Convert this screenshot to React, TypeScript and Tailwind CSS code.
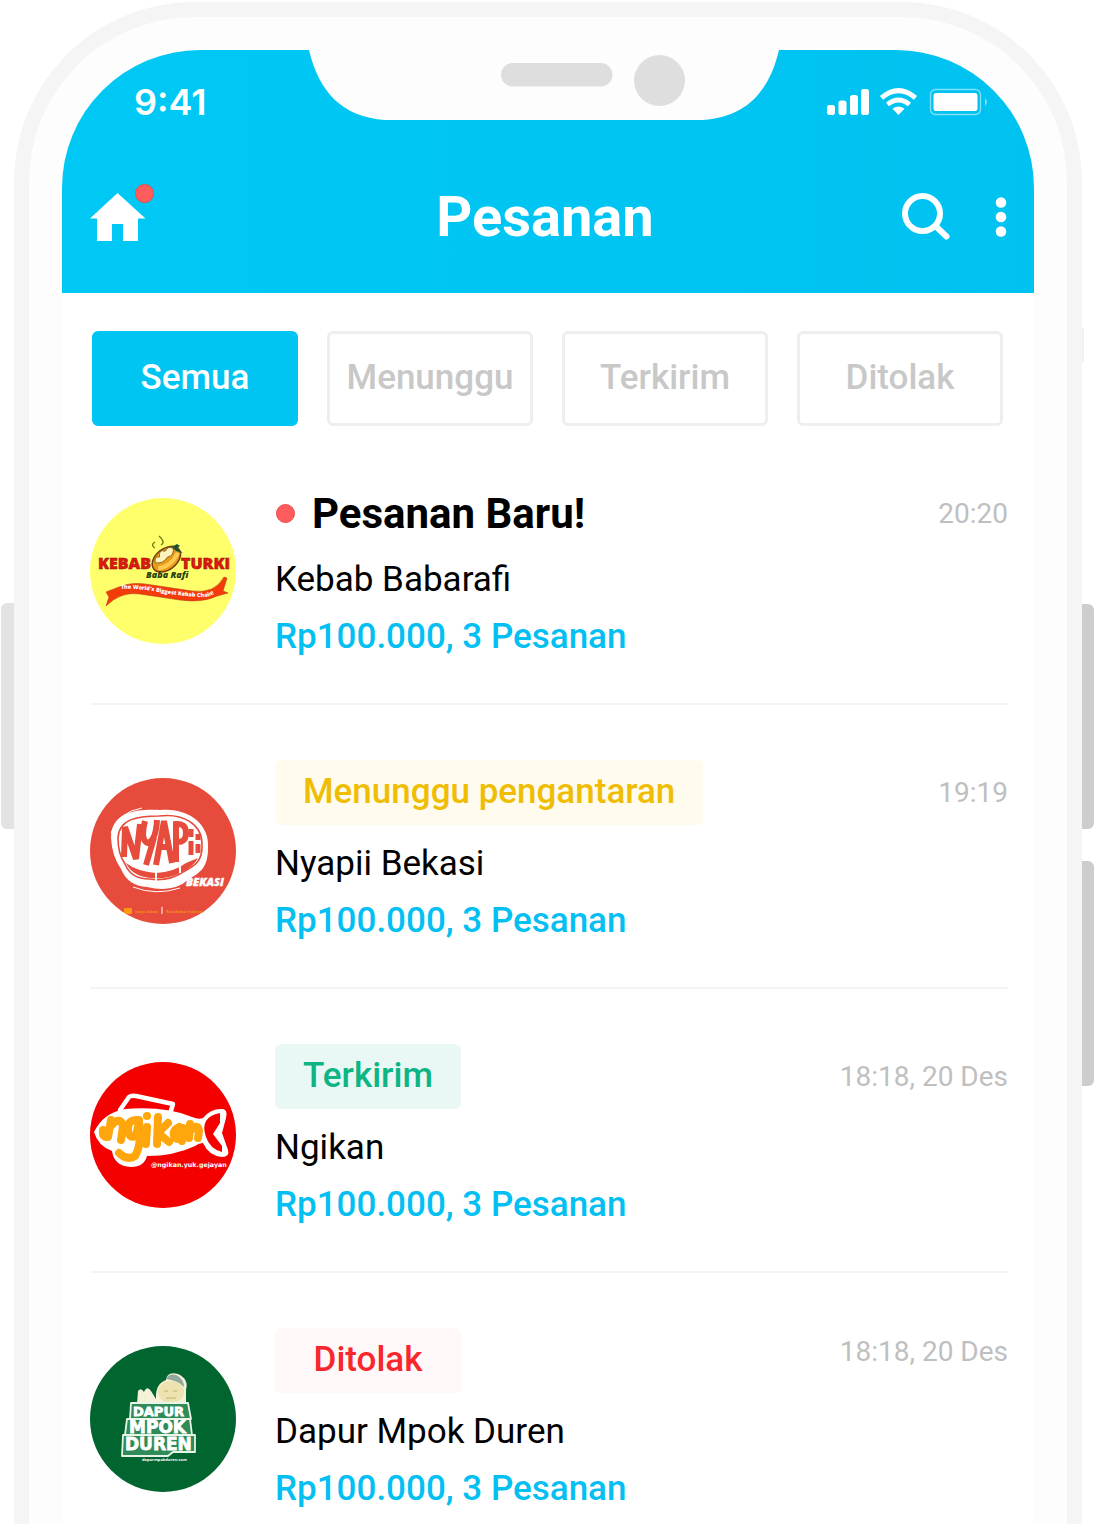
import React, { useState } from "react";

const tabs = ["Semua", "Menunggu", "Terkirim", "Ditolak"];

function HomeIcon() {
  return (
    <svg viewBox="0 0 56 50" className="block h-[50px] w-14" fill="#fff" aria-hidden="true">
      <path d="M27.5 1 L0 26.5 H7 V49 H22 V32 H33 V49 H48 V26.5 H55.5 Z" />
    </svg>
  );
}

function SearchIcon() {
  return (
    <svg viewBox="0 0 50 50" className="block h-[50px] w-[50px]" fill="none" stroke="#fff" aria-hidden="true">
      <circle cx="21.500" cy="21.500" r="17.500" strokeWidth="6" />
      <path d="M34.500 34 L45.500 44.500" strokeWidth="6" strokeLinecap="round" />
    </svg>
  );
}

function MoreIcon() {
  return (
    <svg viewBox="0 0 12 40" className="block h-10 w-3" fill="#fff" aria-hidden="true">
      <circle cx="6" cy="5.500" r="5.300" />
      <circle cx="6" cy="20" r="5.300" />
      <circle cx="6" cy="34.500" r="5.300" />
    </svg>
  );
}

function StatusIcons() {
  return (
    <svg viewBox="0 0 162 28" className="h-7 w-[162px]" fill="#fff" aria-label="Status">
      <rect x="1" y="17" width="8" height="10" rx="2.800" />
      <rect x="12.500" y="12.500" width="8" height="14.500" rx="2.800" />
      <rect x="24" y="7" width="8" height="20" rx="2.800" />
      <rect x="35" y="1" width="8" height="26" rx="2.800" />
      <g fill="none" stroke="#fff">
        <path d="M55.500 9.800 Q72.500 -4.500 89.500 9.800" strokeWidth="5" />
        <path d="M61.500 16.500 Q72.500 7.500 83.500 16.500" strokeWidth="4.600" />
      </g>
      <path d="M66.500 20.800 Q72.500 16 78.500 20.800 L72.500 27 Z" />
      <rect x="104.500" y="1.500" width="50" height="25" rx="5" fill="none" stroke="#fff" strokeOpacity=".5" strokeWidth="1.300" />
      <rect x="107.500" y="5" width="44" height="18" rx="2.800" />
      <path d="M159 10 Q163 14 159 18 Z" fillOpacity=".5" />
    </svg>
  );
}

function Notch() {
  return (
    <svg viewBox="0 0 470 70" className="absolute top-0 left-[247px] h-[70px] w-[470px]" aria-hidden="true">
      <path d="M0 0 C10 42 33 67 76 70 H394 C437 67 460 42 470 0 Z" fill="#fdfdfd" />
      <rect x="192" y="13" width="111.500" height="23.500" rx="11.700" fill="#dedede" />
      <circle cx="350.500" cy="30.500" r="25.500" fill="#dedede" />
    </svg>
  );
}

function KebabLogo() {
  return (
    <svg viewBox="0 0 146 146" className="h-[146px] w-[146px]" role="img" aria-label="Kebab Turki Baba Rafi">
      <defs>
        <path id="kebab-ribbon" d="M31 91 Q48 90 68 94 T112 99 Q122 99 128 93" />
      </defs>
      <circle cx="73" cy="73" r="73" fill="#ffff6b" />
      <g fill="#e3170f" stroke="#8a1108" strokeWidth=".5" fontFamily="Open Sans, sans-serif" fontWeight="800" fontSize="16">
        <text x="8" y="71">KEBAB</text>
        <text x="91" y="71">TURKI</text>
      </g>
      <g transform="rotate(-38 77 62)">
        <ellipse cx="77" cy="61" rx="16" ry="10.500" fill="#e89a1c" stroke="#713f10" strokeWidth="1.500" />
        <path d="M65 63 Q76 70 90 63" fill="none" stroke="#ffc94d" strokeWidth="4" />
        <path d="M66 57 q3 -6 7 -2 q4 -7 8 -1 q6 -3 8 3 q-4 6 -10 3 q-7 3 -13 -3Z" fill="#fff3bd" stroke="#7c6115" strokeWidth=".8" />
      </g>
      <path d="M82 49 l5 -3 3 2 -3 2 6 5 -7 -2Z" fill="#175232" />
      <path d="M65 50 Q60 47 65 44 M71 47 Q76 44 69 38" fill="none" stroke="#65700d" strokeWidth="1.300" />
      <text x="56" y="80" fill="#28400a" fontFamily="Open Sans, sans-serif" fontWeight="800" fontStyle="italic" fontSize="9">Baba Rafi</text>
      <path d="M16 94 L29 89 Q42 83 62 87 L102 93 Q125 96 134 79 L137 80 L133 93 L138 95 L127 98 Q113 105 90 102 L50 96 Q31 93 16 108 L19 99 Z" fill="#f53b0a" stroke="#b64015" strokeWidth=".6" />
      <text fill="#fff" fontFamily="Open Sans, sans-serif" fontWeight="800" fontSize="5.500">
        <textPath href="#kebab-ribbon">The World's Biggest Kebab Chain!</textPath>
      </text>
    </svg>
  );
}

function NyapiiLogo() {
  return (
    <svg viewBox="0 0 146 146" className="h-[146px] w-[146px]" role="img" aria-label="Nyapii Bekasi">
      <defs>
        <clipPath id="nyapii-disc"><circle cx="73" cy="73" r="73" /></clipPath>
      </defs>
      <circle cx="73" cy="73" r="73" fill="#e64b3c" />
      <path d="M21 60 C21 34 46 31 70 32 C98 29 120 46 118 70 C118 92 108 95 98 102 Q83 115 57 109 Q38 108 31 91 Q22 78 21 60Z" fill="#fff" />
      <path d="M28 60 C29 41 47 38 69 38 C93 35 112 46 112 66 C113 84 104 88 93 94 Q78 104 59 101 Q41 101 35 86 Q28 76 28 60Z" fill="none" stroke="#e64b3c" strokeWidth="1.600" />
      <path d="M36 85 Q46 93 66 95 Q84 94 96 85 L108 80 Q104 88 92 94 Q78 102 60 100 Q42 98 36 85Z" fill="#e64b3c" />
      <g fill="none" stroke="#e64b3c" strokeWidth="6">
        <path d="M34 79 L35 49 L46 81 L50 46" />
        <path d="M55 43 Q50 63 58 65 Q66 62 67 42 M64 60 L56 87" />
        <path d="M66 87 L74 43 L82 85 M69 69 H80" />
        <path d="M86 84 V46 Q96 45 96 55 Q96 65 86 64" />
        <path d="M101 51 V59 M101 63 V77 M108 56 V62 M108 66 V75" strokeWidth="5" />
      </g>
      <path d="M21 55 Q28 34 52 30 M43 109 Q66 118 90 110" fill="none" stroke="#fff" strokeWidth="1" />
      <path d="M66 95 v8 M90 86 v9" stroke="#fff" strokeWidth="2" />
      <text x="96" y="108" fill="#fff" stroke="#fff" strokeWidth=".4" fontFamily="Open Sans, sans-serif" fontWeight="800" fontStyle="italic" fontSize="11">BEKASI</text>
      <g clipPath="url(#nyapii-disc)">
        <rect x="34" y="130" width="8" height="6" rx="1" fill="#ff9810" />
        <text x="45" y="135" fill="#f88d18" fontFamily="Open Sans, sans-serif" fontWeight="700" fontSize="3.500">nyapii.bekasi</text>
        <path d="M72 129 v7" stroke="#fff" strokeWidth="1" />
        <text x="76" y="135" fill="#f88d18" fontFamily="Open Sans, sans-serif" fontWeight="700" fontSize="3.500">Kota Bekasi Indonesia</text>
      </g>
    </svg>
  );
}

function NgikanLogo() {
  return (
    <svg viewBox="0 0 146 146" className="h-[146px] w-[146px]" role="img" aria-label="Ngikan">
      <circle cx="73" cy="73" r="73" fill="#f50000" />
      <path d="M30 48 L39 35 Q41 33 46 34 L83 42 L80 52" fill="none" stroke="#fff" strokeWidth="4.500" strokeLinejoin="round" strokeLinecap="round" />
      <path d="M4 70 Q13 51 35 47 Q76 44 102 55 Q109 58 113 56 Q121 46 133 47 Q138 48 136 56 L132 71 L138 88 Q140 95 132 95 Q119 94 113 81 Q109 81 105 84 Q84 94 57 94 Q54 105 41 105 Q24 104 22 89 Q8 84 4 70Z" fill="#fff" />
      <path d="M130 51 Q109 55 116 75 Q120 87 132 90 L132 84 L123 72 L130 61Z" fill="#f50000" />
      <g fill="none" stroke="#ffa60d" strokeWidth="8" strokeLinecap="round" strokeLinejoin="round">
        <path d="M13 68 Q12 76 18 75 L21 58 M20 65 Q30 53 33 64 L31 78" />
        <path d="M49 58 Q37 57 38 68 Q39 77 46 74 L49 60 Q52 83 45 94 Q37 99 29 91" />
        <path d="M57 65 L56 82 M68 55 L67 82 M78 61 L68 71 L79 80" />
        <path d="M89 65 Q81 69 85 76 Q90 80 93 66 L92 79" />
        <path d="M100 62 L99 76 M101 68 Q108 61 109 69 L108 76" />
      </g>
      <circle cx="57" cy="54" r="4" fill="#ffa60d" />
      <text x="61" y="105" fill="#fff" fontFamily="DejaVu Sans, sans-serif" fontWeight="700" fontSize="6.300">@ngikan.yuk.gejayan</text>
    </svg>
  );
}

function DapurLogo() {
  return (
    <svg viewBox="0 0 146 146" className="h-[146px] w-[146px]" role="img" aria-label="Dapur Mpok Duren">
      <circle cx="73" cy="73" r="73" fill="#00652e" />
      <path d="M47 58 L48 45 Q51 41 54 46 Q57 39 61 45 L66 53 Q65 38 76 34 Q77 25 88 28 Q99 33 96 44 L96 58Z" fill="#f4f1d9" />
      <path d="M76 33 Q80 26 88 30 Q94 34 94 41 Q87 34 76 33Z" fill="#93a7a0" />
      <ellipse cx="81" cy="46" rx="13" ry="11" fill="#ece3b0" />
      <path d="M74 45 h4 M83 45 h4 M76 52 h10" fill="none" stroke="#c4b071" strokeWidth="1" />
      <g fill="#2f8c59" stroke="#e7f5e9" strokeWidth="1.800" strokeLinejoin="round">
        <path d="M41 57 H98 L101 73 H40Z" />
        <path d="M37 73 H100 L102 89 H35Z" />
        <path d="M33 89 H105 V106 H83 L78 110 H32Z" />
      </g>
      <g fill="#fff" stroke="#fff" strokeWidth=".8" fontFamily="DejaVu Sans, sans-serif" fontWeight="700">
        <text x="43" y="70" fontSize="13">DAPUR</text>
        <text x="39" y="87" fontSize="17">MPOK</text>
        <text x="35" y="104" fontSize="17">DUREN</text>
      </g>
      <text x="52" y="115" fill="#fff" fontFamily="Open Sans, sans-serif" fontWeight="700" fontSize="4">dapurmpokduren.com</text>
    </svg>
  );
}

type Order = {
  name: string;
  status: string;
  time: string;
  timeClass: string;
  badgeClass?: string;
  logo: () => React.ReactElement;
};

const orders: Order[] = [
  { name: "Kebab Babarafi", status: "Pesanan Baru!", time: "20:20", timeClass: "leading-[75px]", logo: KebabLogo },
  { name: "Nyapii Bekasi", status: "Menunggu pengantaran", time: "19:19", timeClass: "leading-[65px]", badgeClass: "bg-[#fffbee] text-[#f0bd05]", logo: NyapiiLogo },
  { name: "Ngikan", status: "Terkirim", time: "18:18, 20 Des", timeClass: "leading-[65px]", badgeClass: "bg-[#e9f8f4] text-[#0db585]", logo: NgikanLogo },
  { name: "Dapur Mpok Duren", status: "Ditolak", time: "18:18, 20 Des", timeClass: "leading-[48px]", badgeClass: "bg-[#fff8f8] text-[#f8262d]", logo: DapurLogo },
];

function OrderRow({ order }: { order: Order }) {
  const Logo = order.logo;
  return (
    <li className="flex items-start border-b-2 border-[#f4f4f4] pt-[55px] pb-[38px] first:pt-[50px] last:border-0 last:pb-2">
      <div className={order.badgeClass ? "mt-[18px] shrink-0" : "mt-[22px] shrink-0"}>
        <Logo />
      </div>
      <div className="ml-[39px] min-w-0 flex-1">
        {order.badgeClass ? (
          <span className={`mb-[10px] flex h-[65px] w-fit min-w-[186px] items-center justify-center rounded-md px-7 text-[35px] font-medium ${order.badgeClass}`}>
            {order.status}
          </span>
        ) : (
          <h2 className="flex h-[75px] items-center gap-[17px] pl-px text-[42px] font-bold">
            <span className="h-[19px] w-[19px] rounded-full border border-[#f04848] bg-[#ff5d5d]" />
            {order.status}
          </h2>
        )}
        <p className="text-[35px] leading-[57px]">{order.name}</p>
        <p className="text-[35px] leading-[57px] font-medium text-[#03bff2]">Rp100.000, 3 Pesanan</p>
      </div>
      <time className={`shrink-0 text-[28px] text-[#bfbfbf] ${order.timeClass}`}>{order.time}</time>
    </li>
  );
}

export default function App() {
  const [active, setActive] = useState("Semua");
  return (
    <div className="min-h-screen overflow-hidden bg-white pt-0.5 font-['Roboto',sans-serif] text-black">
      <div className="relative mx-[14px]">
        <span className="absolute top-[601px] -left-[13px] h-[226px] w-[13px] rounded-l-md bg-[#e3e3e3]" />
        <span className="absolute top-[326px] -right-0.5 h-[34px] w-0.5 bg-[#f1f1f1]" />
        <span className="absolute top-[602px] -right-3 h-[225px] w-3 rounded-r-md bg-[#cdcdcd]" />
        <span className="absolute top-[859px] -right-3 h-[225px] w-3 rounded-r-md bg-[#cdcdcd]" />
        <div className="rounded-t-[180px] border-[15px] border-b-0 border-[#f5f5f5] bg-[#fdfdfd] px-[33px] pt-[33px]">
          <div className="relative overflow-hidden rounded-t-[138px] bg-white">
            <header className="bg-linear-to-r from-[#00c8f5] to-[#00c2f0] pb-[39px] text-white">
              <Notch />
              <div className="flex h-[104px] items-center justify-between pr-[46px] pl-[72px]">
                <span className="font-['Inter',sans-serif] text-[36px] font-semibold">9:41</span>
                <StatusIcons />
              </div>
              <div className="mt-[26px] grid h-[74px] grid-cols-[1fr_auto_1fr] items-center pr-[34px] pl-7">
                <button className="relative justify-self-start" aria-label="Beranda">
                  <HomeIcon />
                  <span className="absolute -top-2 -right-2 h-[19px] w-[19px] rounded-full border border-[#f04848] bg-[#ff5d5d]" />
                </button>
                <h1 className="text-[56px] leading-none font-bold">Pesanan</h1>
                <div className="-mr-[7px] flex items-center gap-11 justify-self-end">
                  <button aria-label="Cari"><SearchIcon /></button>
                  <button aria-label="Menu lainnya"><MoreIcon /></button>
                </div>
              </div>
            </header>
            <nav className="grid grid-cols-4 gap-[29px] pt-[38px] pr-[31px] pl-[30px]">
              {tabs.map((t) => (
                <button
                  key={t}
                  aria-pressed={active === t}
                  onClick={() => setActive(t)}
                  className={`h-[95px] rounded-md border-[3px] text-[35px] font-medium ${active === t ? "border-[#00c5f3] bg-[#00c5f3] text-white" : "border-[#eeeeee] bg-white text-[#c8c8c8]"}`}
                >
                  {t}
                </button>
              ))}
            </nav>
            <ul className="pr-[26px] pl-7">
              {orders.map((o) => (
                <OrderRow key={o.name} order={o} />
              ))}
            </ul>
          </div>
        </div>
      </div>
    </div>
  );
}
